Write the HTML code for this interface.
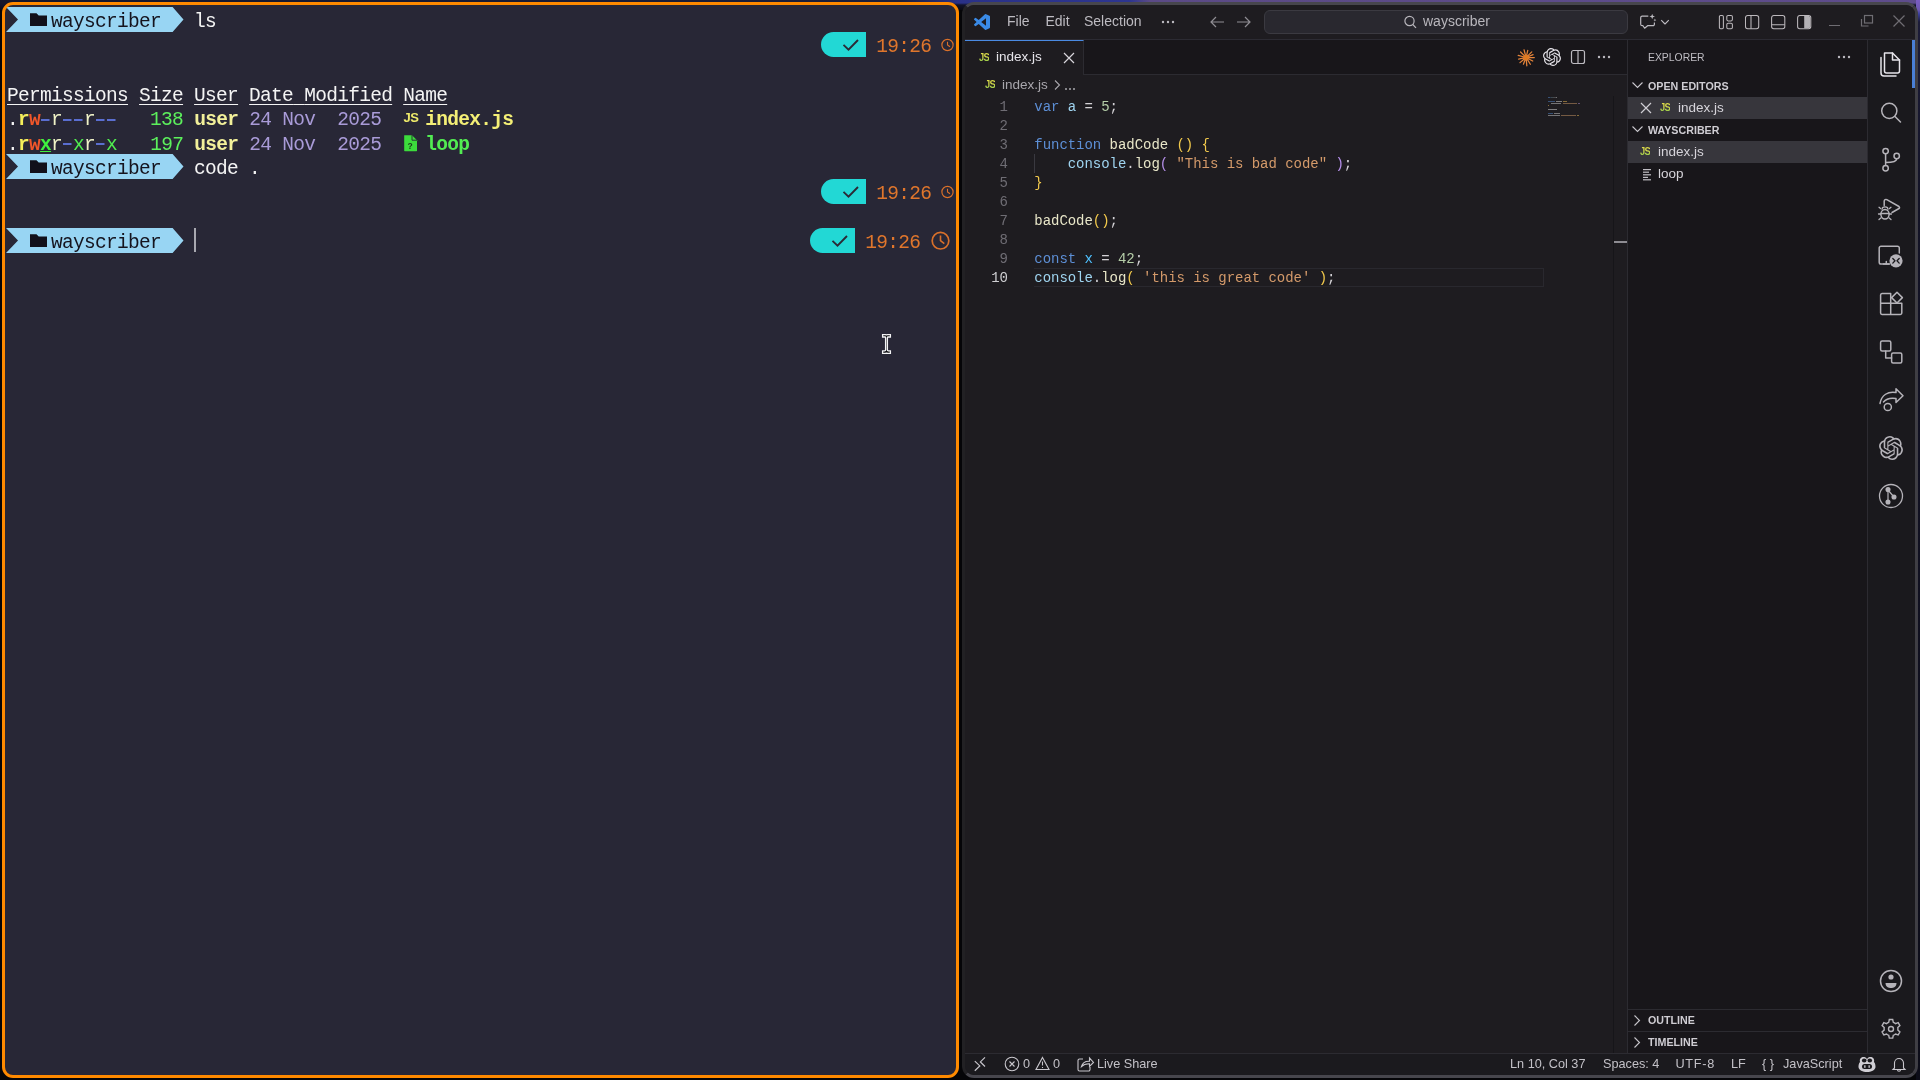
<!DOCTYPE html>
<html><head><meta charset="utf-8">
<style>
*{margin:0;padding:0;box-sizing:border-box}
html,body{width:1920px;height:1080px;overflow:hidden;background:#050508}
body{position:relative;font-family:"Liberation Sans",sans-serif;will-change:transform}
.abs{position:absolute}
#wall{position:absolute;left:0;top:0;width:1920px;height:10px;background:linear-gradient(180deg,rgba(0,0,0,0) 0,rgba(0,0,0,0) 3px,#12132a 5px,#0a0a14 10px),linear-gradient(90deg,#15162a 0,#1c1f3a 900px,#2a3188 960px,#2d3590 1130px,#5b4a86 1150px,#5e4c8c 1920px)}
/* terminal */
#term{position:absolute;left:2px;top:2px;width:957px;height:1076px;border:3px solid #ff8a00;border-radius:11px;background:#282736;overflow:hidden}
.tl{position:absolute;left:2px;height:24.5px;line-height:24.5px;font-family:"Liberation Mono",monospace;font-size:19.5px;letter-spacing:-0.7px;margin-top:3px;color:#f4f4f4;white-space:pre}
.pr{position:absolute;left:1px;width:177px;height:25px;background:#99d6f4}
.pr .notch{position:absolute;left:0;top:0;width:0;height:0;border-top:12.5px solid #282736;border-bottom:12.5px solid #282736;border-right:0;border-left:12px solid #282736;clip-path:polygon(0 0,100% 50%,0 100%)}
/* vscode */
#vs{position:absolute;left:962px;top:2px;width:956px;height:1076px;border:3px solid #47464d;border-left-color:#222124;border-right-color:#3f3e44;border-radius:12px;background:#1e1c20;overflow:hidden}
u{text-decoration-thickness:1px;text-underline-offset:2.5px}
.d{display:inline-block;width:11px;height:24.5px;vertical-align:top;background:linear-gradient(#5a6ed0,#5a6ed0) no-repeat 1px 10.6px/8.5px 2px}
.ui{font-family:"Liberation Sans",sans-serif;color:#cfcdd2}
#vsi{position:absolute;left:-965px;top:-5px;width:1920px;height:1080px}
.jsi{margin-top:0.5px;font:bold 11px/12px "Liberation Sans",sans-serif;letter-spacing:-0.8px;transform:scaleX(0.85);transform-origin:0 0;background:linear-gradient(180deg,#e2dc48 0,#d4d84a 45%,#8acb4c 100%);-webkit-background-clip:text;background-clip:text;color:transparent}
.sh{font-size:10.7px;line-height:14px;font-weight:bold;color:#cfcdd3}
.sb{top:1056px;font-size:12.7px;line-height:16px;color:#c3c1c7}
.kw{color:#5d8fd6}.vr{color:#9fd4f0}.nm{color:#b5cea8}.fn{color:#e8e6c8}.b1{color:#f2c94c}.b2{color:#b48ee8}.st{color:#d49a6a}.cn{color:#4fc1ff}
.code{font-family:"Liberation Mono",monospace;font-size:14px;letter-spacing:-0.04px;white-space:pre;position:absolute;height:19px;line-height:19px}
</style></head>
<body>
<div id="wall"></div>
<div class="abs" style="left:1916px;top:0;width:4px;height:1080px;background:linear-gradient(#7a5cc0 0,#6c58b0 10px,#3a3f9a 14px,#1c1c38 22px,#131326 200px,#0c0c18 1080px)"></div>

<div id="term">
<!-- row 0 prompt -->
<svg class="abs" style="left:1px;top:2px" width="180" height="25"><polygon points="0,0 166.6,0 177.5,12.5 166.6,25 0,25 12,12.5" fill="#98d5f3"/><path d="M24,6.2 h6.5 l2.2,2.3 h8.3 v10.6 h-17 z" fill="#11101a"/></svg>
<div class="tl" style="top:2px"><span style="color:#15141e">    wayscriber</span>   ls</div>
<!-- row 1 right -->
<svg class="abs" style="left:816px;top:26.5px" width="140" height="25"><path d="M12.5,0 H45 V25 H12.5 A12.5,12.5 0 0 1 12.5,0 z" fill="#22d8d5"/><polyline points="22.5,12.9 27.5,17.6 37,8" fill="none" stroke="#2b2a36" stroke-width="1.9"/><circle cx="126.5" cy="13" r="5.6" fill="none" stroke="#d9702a" stroke-width="1.2"/><polyline points="126.5,9.8 126.5,13 129,14.8" fill="none" stroke="#d9702a" stroke-width="1.1"/></svg>
<div class="tl" style="top:26.5px;color:#e0762c">                                                                               19:26</div>
<!-- row 3 header -->
<div class="tl" style="top:75.5px"><u>Permissions</u> <u>Size</u> <u>User</u> <u>Date</u><u> </u><u>Modified</u> <u>Name</u></div>
<!-- row 4 -->
<div class="tl" style="top:100px">.<b style="color:#f5ef5a">r</b><b style="color:#f0562a">w</b><i class="d"></i><span style="color:#eff2c6">r</span><i class="d"></i><i class="d"></i><span style="color:#eff2c6">r</span><i class="d"></i><i class="d"></i>   <span style="color:#5cf05c">138</span> <b style="color:#f2f09a">user</b> <span style="color:#a99bd8">24 Nov  2025</span>    <b style="color:#f4ef76">index.js</b></div>
<div class="abs" style="left:398.5px;top:104.5px;height:24.5px;line-height:24.5px;font:bold 13px 'Liberation Sans';color:#eeea6a;letter-spacing:-0.5px">JS</div>
<!-- row 5 -->
<div class="tl" style="top:124.5px">.<b style="color:#f5ef5a">r</b><b style="color:#f0562a">w</b><b style="color:#3ff03f;text-decoration:underline">x</b><span style="color:#eff2c6">r</span><i class="d"></i><span style="color:#50ee50">x</span><span style="color:#eff2c6">r</span><i class="d"></i><span style="color:#50ee50">x</span>   <span style="color:#5cf05c">197</span> <b style="color:#f2f09a">user</b> <span style="color:#a99bd8">24 Nov  2025</span>    <b style="color:#52ec52">loop</b></div>
<svg class="abs" style="left:398px;top:129.5px" width="16" height="17"><path d="M1.2,0.2 H9 L14,5.2 V15.6 a0.6,0.6 0 0 1 -0.6,0.6 H1.8 a0.6,0.6 0 0 1 -0.6,-0.6 Z" fill="#3cdc3c"/><path d="M9,0.2 V5.2 H14" fill="none" stroke="#282736" stroke-width="0.9"/><text x="4.5" y="13.5" font-size="8.5" font-family="Liberation Sans" fill="#1a3a1a" font-weight="bold">?</text></svg>
<!-- row 6 prompt -->
<svg class="abs" style="left:1px;top:149px" width="180" height="25"><polygon points="0,0 166.6,0 177.5,12.5 166.6,25 0,25 12,12.5" fill="#98d5f3"/><path d="M24,6.2 h6.5 l2.2,2.3 h8.3 v10.6 h-17 z" fill="#11101a"/></svg>
<div class="tl" style="top:149px"><span style="color:#15141e">    wayscriber</span>   code .</div>
<!-- row 7 right -->
<svg class="abs" style="left:816px;top:173.5px" width="140" height="25"><path d="M12.5,0 H45 V25 H12.5 A12.5,12.5 0 0 1 12.5,0 z" fill="#22d8d5"/><polyline points="22.5,12.9 27.5,17.6 37,8" fill="none" stroke="#2b2a36" stroke-width="1.9"/><circle cx="126.5" cy="13" r="5.6" fill="none" stroke="#d9702a" stroke-width="1.2"/><polyline points="126.5,9.8 126.5,13 129,14.8" fill="none" stroke="#d9702a" stroke-width="1.1"/></svg>
<div class="tl" style="top:173.5px;color:#e0762c">                                                                               19:26</div>
<!-- row 9 prompt -->
<svg class="abs" style="left:1px;top:222.5px" width="180" height="25"><polygon points="0,0 166.6,0 177.5,12.5 166.6,25 0,25 12,12.5" fill="#98d5f3"/><path d="M24,6.2 h6.5 l2.2,2.3 h8.3 v10.6 h-17 z" fill="#11101a"/></svg>
<div class="tl" style="top:222.5px"><span style="color:#15141e">    wayscriber</span></div>
<div class="abs" style="left:189px;top:223px;width:1.5px;height:24px;background:#a8a8b0"></div>
<svg class="abs" style="left:805px;top:222.5px" width="150" height="25"><path d="M12.5,0 H45 V25 H12.5 A12.5,12.5 0 0 1 12.5,0 z" fill="#22d8d5"/><polyline points="22.5,12.9 27.5,17.6 37,8" fill="none" stroke="#2b2a36" stroke-width="1.9"/><circle cx="130.5" cy="12.7" r="8.3" fill="none" stroke="#d9702a" stroke-width="1.7"/><polyline points="130.5,7.5 130.5,12.7 134.3,15.6" fill="none" stroke="#d9702a" stroke-width="1.6"/></svg>
<div class="tl" style="top:222.5px;color:#e0762c">                                                                              19:26</div>
<!-- mouse cursor -->
<svg class="abs" style="left:865px;top:320px" width="35" height="40"><path d="M12.6,9.6 H15.5 Q16.5,9.6 16.5,10.4 Q16.5,9.6 17.5,9.6 H20.4 V12 H18.2 Q17.4,12 17.4,12.8 V25.1 Q17.4,25.9 18.2,25.9 H20.4 V28.4 H17.5 Q16.5,28.4 16.5,27.6 Q16.5,28.4 15.5,28.4 H12.6 V25.9 H14.8 Q15.6,25.9 15.6,25.1 V12.8 Q15.6,12 14.8,12 H12.6 Z" fill="#0a0a0e" stroke="#f4f4f6" stroke-width="1.3"/></svg>
</div>


<div id="vs"><div id="vsi">
<!-- title bar -->
<div class="abs" style="left:965px;top:5px;width:950px;height:35px;background:#1e1c20;border-bottom:1px solid #2c2b33"></div>
<svg class="abs" style="left:974px;top:14px" width="16" height="16" viewBox="0 0 100 100"><path d="M96.46 10.8 75.86.87a6.23 6.23 0 0 0-7.1 1.2L29.35 38.04 12.17 25.01a4.16 4.16 0 0 0-5.31.24L1.35 30.25a4.16 4.16 0 0 0 0 6.16L16.25 50 1.35 63.59a4.16 4.16 0 0 0 0 6.16l5.51 5a4.160 4.16 0 0 0 5.31.24l17.18-13.03 39.41 35.96a6.230 6.23 0 0 0 7.1 1.2l20.6-9.91a6.24 6.24 0 0 0 3.54-5.62V16.42a6.24 6.24 0 0 0-3.54-5.62ZM75.02 72.7 45.11 50l29.91-22.7Z" fill="#3a8ae6"/></svg>
<div class="abs ui" style="left:1007px;top:12px;font-size:14px;line-height:18px;color:#bdbbc1">File</div>
<div class="abs ui" style="left:1045.5px;top:12px;font-size:14px;line-height:18px;color:#bdbbc1">Edit</div>
<div class="abs ui" style="left:1084px;top:12px;font-size:14px;line-height:18px;color:#bdbbc1">Selection</div>
<svg class="abs" style="left:1160px;top:18px" width="16" height="8"><circle cx="3" cy="4" r="1.2" fill="#bdbbc1"/><circle cx="8" cy="4" r="1.2" fill="#bdbbc1"/><circle cx="13" cy="4" r="1.2" fill="#bdbbc1"/></svg>
<svg class="abs" style="left:1208px;top:14px" width="48" height="16" fill="none" stroke="#8f8d93" stroke-width="1.2"><path d="M3,8 H16 M8,3 L3,8 L8,13"/><path d="M29,8 H42 M37,3 L42,8 L37,13"/></svg>
<div class="abs" style="left:1264px;top:10px;width:364px;height:24px;border:1px solid #3b3a41;border-radius:6px;background:#29282f"></div>
<svg class="abs" style="left:1403px;top:15px" width="15" height="14" fill="none" stroke="#b8b6bc" stroke-width="1.2"><circle cx="6.5" cy="6" r="4.6"/><path d="M9.8,9.5 L13,12.8"/></svg>
<div class="abs ui" style="left:1423px;top:12.5px;font-size:14px;line-height:17px;color:#b9b7bd">wayscriber</div>
<!-- copilot chat -->
<svg class="abs" style="left:1638px;top:12px" width="34" height="20" fill="none" stroke="#bcbac0" stroke-width="1.2" stroke-linejoin="round"><path d="M10.3,4.2 H4.2 a1.5,1.5 0 0 0 -1.5,1.5 V12.2 a1.5,1.5 0 0 0 1.5,1.5 H5 L6.6,16.2 L9.6,13.7 H15 a1.4,1.4 0 0 0 1.4,-1.4 V10.6"/><path d="M14.2,1.8 l0.75,2 2,0.75 -2,0.75 -0.75,2 -0.75,-2 -2,-0.75 2,-0.75z" fill="#bcbac0" stroke="none"/><path d="M16.9,6.6 l0.45,1.05 1.05,0.45 -1.05,0.45 -0.45,1.05 -0.45,-1.05 -1.05,-0.45 1.05,-0.45z" fill="#bcbac0" stroke="none"/><path d="M23.2,8.2 L27,12 L30.8,8.2" stroke-width="1.1"/></svg>
<!-- layout icons -->
<svg class="abs" style="left:1716px;top:13px" width="100" height="18" fill="none" stroke="#bcb8bc" stroke-width="1.05">
<rect x="3.4" y="2.5" width="4" height="13.2" rx="1.2"/><rect x="10.8" y="2.5" width="5.6" height="5.4" rx="1.3"/><rect x="10.8" y="10.3" width="5.6" height="5.4" rx="1.3"/>
<rect x="29.5" y="2.5" width="13.2" height="13.2" rx="2.2"/><path d="M35,2.5 V15.7"/>
<rect x="55.6" y="2.5" width="13.2" height="13.2" rx="2.2"/><path d="M55.6,11.8 H68.8"/>
<rect x="81.6" y="2.5" width="13.2" height="13.2" rx="2.2"/><path d="M88.2,3 H92.6 a1.7,1.7 0 0 1 1.7,1.7 V13.5 a1.7,1.7 0 0 1 -1.7,1.7 H88.2 z" fill="#b4b2b6" stroke="none"/>
</svg>
<svg class="abs" style="left:1826px;top:10px" width="84" height="22" fill="none" stroke="#6f6d73" stroke-width="1.2"><path d="M3,15.5 H14"/><rect x="38.5" y="5.5" width="8" height="7.5"/><path d="M35.5,9 V16 H42.5"/><path d="M67.5,5.5 L78.5,16.5 M78.5,5.5 L67.5,16.5"/></svg>

<!-- tab bar -->
<div class="abs" style="left:965px;top:40px;width:662px;height:35px;background:#18161a;border-bottom:1px solid #2c2b31"></div>
<div class="abs" style="left:965px;top:40px;width:119px;height:35px;background:#1e1c20;border-top:1px solid #4a8ae2;border-right:1px solid #2c2b31"></div>
<div class="abs jsi" style="left:978.5px;top:50px">JS</div>
<div class="abs ui" style="left:996px;top:48px;font-size:13.5px;line-height:17px;color:#e6e4ea">index.js</div>
<svg class="abs" style="left:1062px;top:51px" width="14" height="14" fill="none" stroke="#d8d6dc" stroke-width="1.2"><path d="M2,2 L12,12 M12,2 L2,12"/></svg>
<!-- editor actions -->
<svg class="abs" style="left:1517px;top:48px" width="19" height="19"><path d="M11.10,9.50 L17.30,9.50 M10.87,10.44 L15.72,13.02 M10.16,11.20 L13.34,16.28 M9.27,11.49 L9.82,17.77 M8.35,11.35 L6.40,16.18 M7.57,10.79 L2.97,14.64 M7.14,9.92 L1.67,11.08 M7.17,8.98 L1.18,7.38 M7.69,8.09 L3.58,3.98 M8.58,7.57 L7.03,1.77 M9.55,7.55 L10.76,2.29 M10.51,8.09 L14.76,3.84 M10.95,8.75 L16.05,6.69" stroke="#e5843a" stroke-width="1.25" stroke-linecap="round"/><circle cx="9.1" cy="9.5" r="2.8" fill="#e07a22"/></svg>
<svg class="abs openai" style="left:1543px;top:48px" width="18" height="18" viewBox="0 0 24 24"><path fill="#e4e2e8" d="M22.28 9.82a5.98 5.98 0 0 0-.52-4.91 6.05 6.05 0 0 0-6.51-2.9A6.07 6.07 0 0 0 4.98 4.18a5.98 5.98 0 0 0-4 2.9 6.05 6.05 0 0 0 .74 7.1 5.98 5.98 0 0 0 .51 4.91 6.05 6.05 0 0 0 6.51 2.9A5.98 5.98 0 0 0 13.26 24a6.06 6.06 0 0 0 5.77-4.21 5.99 5.99 0 0 0 4-2.9 6.06 6.06 0 0 0-.75-7.07zM13.26 22.43a4.48 4.48 0 0 1-2.88-1.04l.14-.08 4.78-2.76a.8.8 0 0 0 .39-.68v-6.74l2.02 1.17a.07.07 0 0 1 .04.05v5.58a4.5 4.5 0 0 1-4.49 4.5zm-9.66-4.13a4.47 4.47 0 0 1-.53-3.01l.14.09 4.78 2.76a.77.77 0 0 0 .78 0l5.84-3.37v2.33a.08.08 0 0 1-.03.06L9.74 19.95a4.5 4.5 0 0 1-6.14-1.65zM2.34 7.9a4.49 4.49 0 0 1 2.37-1.97V11.6a.77.77 0 0 0 .39.68l5.81 3.35-2.02 1.17a.08.08 0 0 1-.07 0l-4.83-2.79A4.5 4.5 0 0 1 2.34 7.87zm16.6 3.86L13.1 8.36 15.12 7.2a.08.08 0 0 1 .07 0l4.83 2.79a4.49 4.49 0 0 1-.68 8.1v-5.68a.79.79 0 0 0-.41-.67zm2.01-3.02l-.14-.09-4.77-2.78a.78.78 0 0 0-.79 0L9.41 9.23V6.9a.07.07 0 0 1 .03-.06l4.83-2.79a4.5 4.5 0 0 1 6.68 4.66zM8.31 12.86L6.29 11.7a.08.08 0 0 1-.04-.06V6.08a4.5 4.5 0 0 1 7.38-3.45l-.14.08L8.71 5.47a.8.8 0 0 0-.39.68zm1.1-2.37l2.6-1.5 2.61 1.5v3l-2.6 1.5-2.61-1.5z"/></svg>
<svg class="abs" style="left:1569px;top:48px" width="18" height="18" fill="none" stroke="#bcbac0" stroke-width="1.2"><rect x="2.5" y="2.5" width="13" height="13" rx="2"/><path d="M9,2.5 V15.5"/></svg>
<svg class="abs" style="left:1596px;top:53px" width="16" height="8"><circle cx="3" cy="4" r="1.2" fill="#bcbac0"/><circle cx="8" cy="4" r="1.2" fill="#bcbac0"/><circle cx="13" cy="4" r="1.2" fill="#bcbac0"/></svg>

<!-- breadcrumb -->
<div class="abs jsi" style="left:984.5px;top:77px">JS</div>
<div class="abs ui" style="left:1002px;top:76px;font-size:13.5px;line-height:17px;color:#a9a7ad">index.js</div>
<svg class="abs" style="left:1052px;top:79px" width="10" height="12" fill="none" stroke="#a9a7ad" stroke-width="1.1"><path d="M3,1.5 L7.5,6 L3,10.5"/></svg>
<svg class="abs" style="left:1064px;top:87px" width="14" height="4"><circle cx="2" cy="2" r="1" fill="#a9a7ad"/><circle cx="6" cy="2" r="1" fill="#a9a7ad"/><circle cx="10" cy="2" r="1" fill="#a9a7ad"/></svg>

<!-- editor -->
<div id="gut" class="abs" style="left:966px;top:97.5px;width:42px;text-align:right;font-family:'Liberation Mono',monospace;font-size:14px;line-height:19px;color:#6f6d74;white-space:pre">1
2
3
4
5
6
7
8
9
<span style="color:#cfcfd2">10</span></div>
<div class="abs" style="left:1034px;top:267.5px;width:510px;height:19px;border:1px solid #29282e;border-left:0"></div>
<div class="abs" style="left:1034px;top:153.5px;width:1px;height:19px;background:#3a3940"></div>
<div id="code" class="abs" style="left:1034.3px;top:97.5px;font-family:'Liberation Mono',monospace;font-size:14px;letter-spacing:-0.04px;line-height:19px;color:#d4d2d6;white-space:pre"><span class="kw">var</span> <span class="vr">a</span> = <span class="nm">5</span>;

<span class="kw">function</span> <span class="fn">badCode</span> <span class="b1">()</span> <span class="b1">{</span>
    <span class="vr">console</span>.<span class="fn">log</span><span class="b2">(</span> <span class="st">"This is bad code"</span> <span class="b2">)</span>;
<span class="b1">}</span>

<span class="fn">badCode</span><span class="b1">()</span>;

<span class="kw">const</span> <span class="cn">x</span> = <span class="nm">42</span>;
<span class="vr">console</span>.<span class="fn">log</span><span class="b1">(</span> <span class="st">'this is great code'</span> <span class="b1">)</span>;</div>
<!-- minimap -->
<svg class="abs" style="left:1546px;top:96px" width="45" height="24">
<g opacity="0.5">
<rect x="2" y="1" width="2.5" height="1" fill="#5588cc"/><rect x="5.5" y="1" width="1" height="1" fill="#9cd"/><rect x="7.5" y="1" width="1" height="1" fill="#ccc"/><rect x="9.5" y="1" width="1.5" height="1" fill="#ccc"/>
<rect x="2" y="5" width="7" height="1" fill="#5588cc"/><rect x="10" y="5" width="6" height="1" fill="#ddd"/><rect x="17" y="5" width="4" height="1" fill="#eb5"/>
<rect x="5" y="7" width="10" height="1" fill="#ccc"/><rect x="17" y="7" width="14" height="1" fill="#c96"/><rect x="32" y="7" width="2" height="1" fill="#a8c"/>
<rect x="2" y="9" width="1" height="1" fill="#eb5"/>
<rect x="2" y="13" width="9" height="1" fill="#ddd"/>
<rect x="2" y="17" width="5" height="1" fill="#5588cc"/><rect x="8" y="17" width="6" height="1" fill="#ccc"/>
<rect x="2" y="19" width="12" height="1" fill="#ccc"/><rect x="15" y="19" width="15" height="1" fill="#c96"/><rect x="31" y="19" width="2" height="1" fill="#eb5"/>
</g></svg>
<div class="abs" style="left:1613px;top:96px;width:14px;height:957px;border-left:1px solid #161519;background:#1e1c20"></div>
<div class="abs" style="left:1614px;top:241px;width:13px;height:2px;background:#8e8c92"></div>

<!-- sidebar -->
<div class="abs" style="left:1627px;top:40px;width:241px;height:1013px;background:#18161a;border-left:1px solid #2c2b31;border-right:1px solid #2c2b31"></div>
<div class="abs ui" style="left:1648px;top:50.5px;font-size:10.4px;line-height:14px;color:#bfbdc3">EXPLORER</div>
<svg class="abs" style="left:1836px;top:53px" width="16" height="8"><circle cx="3" cy="4" r="1.2" fill="#bcbac0"/><circle cx="8" cy="4" r="1.2" fill="#bcbac0"/><circle cx="13" cy="4" r="1.2" fill="#bcbac0"/></svg>
<svg class="abs" style="left:1631px;top:79px" width="14" height="12" fill="none" stroke="#c8c6cc" stroke-width="1.1"><path d="M1.5,3.5 L6.5,8.5 L11.5,3.5"/></svg>
<div class="abs ui sh" style="left:1648px;top:78.5px">OPEN EDITORS</div>
<div class="abs" style="left:1628px;top:97px;width:239px;height:22px;background:#37363c"></div>
<svg class="abs" style="left:1639px;top:101px" width="14" height="14" fill="none" stroke="#d0ced4" stroke-width="1.2"><path d="M2,2 L12,12 M12,2 L2,12"/></svg>
<div class="abs jsi" style="left:1659.5px;top:100px">JS</div>
<div class="abs ui" style="left:1678px;top:99px;font-size:13.5px;line-height:17px;color:#d6d4da">index.js</div>
<svg class="abs" style="left:1631px;top:123px" width="14" height="12" fill="none" stroke="#c8c6cc" stroke-width="1.1"><path d="M1.5,3.5 L6.5,8.5 L11.5,3.5"/></svg>
<div class="abs ui sh" style="left:1648px;top:123px">WAYSCRIBER</div>
<div class="abs" style="left:1628px;top:141px;width:239px;height:22px;background:#37363c"></div>
<div class="abs jsi" style="left:1639.5px;top:144px">JS</div>
<div class="abs ui" style="left:1658px;top:143px;font-size:13.5px;line-height:17px;color:#d6d4da">index.js</div>
<svg class="abs" style="left:1642px;top:167px" width="12" height="14" fill="#c0bec4"><rect x="1" y="2" width="8" height="1.2"/><rect x="1" y="4.6" width="6" height="1.2"/><rect x="1" y="7.2" width="8" height="1.2"/><rect x="1" y="9.8" width="5" height="1.2"/><rect x="1" y="12.2" width="8" height="1.2"/></svg>
<div class="abs ui" style="left:1658px;top:165px;font-size:13.5px;line-height:17px;color:#d6d4da">loop</div>
<div class="abs" style="left:1628px;top:1009px;width:239px;height:1px;background:#2c2b31"></div>
<svg class="abs" style="left:1631px;top:1014px" width="12" height="14" fill="none" stroke="#c8c6cc" stroke-width="1.1"><path d="M3.5,1.5 L8.5,6.5 L3.5,11.5"/></svg>
<div class="abs ui sh" style="left:1648px;top:1013px">OUTLINE</div>
<div class="abs" style="left:1628px;top:1031px;width:239px;height:1px;background:#2c2b31"></div>
<svg class="abs" style="left:1631px;top:1036px" width="12" height="14" fill="none" stroke="#c8c6cc" stroke-width="1.1"><path d="M3.5,1.5 L8.5,6.5 L3.5,11.5"/></svg>
<div class="abs ui sh" style="left:1648px;top:1035px">TIMELINE</div>

<!-- activity bar -->
<div class="abs" style="left:1868px;top:40px;width:47px;height:1013px;background:#1a191d"></div>
<div class="abs" style="left:1912px;top:40px;width:3px;height:48px;background:#4a7fd6"></div>
<svg class="abs" style="left:1868px;top:40px" width="47" height="1013" fill="none" stroke="#b5b3b9" stroke-width="1.5" stroke-linejoin="round" stroke-linecap="round">
<!-- files -->
<path d="M16.5,13 H24.5 L31.5,20 V31 a2,2 0 0 1 -2,2 H18.5 a2,2 0 0 1 -2,-2 Z" stroke="#e6e4ea"/><path d="M24.5,13 V20 H31.5" stroke="#e6e4ea"/><path d="M13,17.5 V33 a3,3 0 0 0 3,3 H28" stroke="#e6e4ea"/>
<!-- search -->
<circle cx="21.3" cy="70.8" r="7.6"/><path d="M27,76.5 L32.5,82"/>
<!-- scm -->
<circle cx="17.6" cy="111.1" r="2.7"/><circle cx="17.6" cy="128.2" r="2.7"/><circle cx="28.7" cy="116" r="2.7"/><path d="M17.6,113.8 V125.5 M28.7,118.7 Q28.7,122.5 17.6,122.5"/>
<!-- debug -->
<path d="M16.2,165.5 V161 a1.8,1.8 0 0 1 2.6,-1.4 L31,166.5 a1.2,1.2 0 0 1 0,2 L24,172.5"/>
<ellipse cx="17" cy="174.3" rx="4.1" ry="4.8"/><path d="M14,169.3 a3,2.4 0 0 1 6,0 M13,173.5 H21" stroke-width="1.3"/><path d="M12.5,168.5 L11,167.3 M21.5,168.5 L23,167.3 M12.5,174 H10.5 M21.5,174 H23.5 M12.8,178 L11,179.5 M21.2,178 L23,179.5" stroke-width="1.3"/>
<!-- remote -->
<path d="M20,224 H11.5 a1.8,1.8 0 0 1 -1.8,-1.8 V208.1 a1.8,1.8 0 0 1 1.8,-1.8 H28 a1.8,1.8 0 0 1 1.8,1.8 V213" transform="translate(1.5,0)"/><path d="M15,224 H20.5 M17.8,221.5 V224" transform="translate(0.5,0)"/>
<circle cx="28" cy="220.8" r="6.6" fill="#b5b3b9" stroke="none"/><path d="M24.8,218.5 L27,220.8 L24.8,223.1 M31.2,218.5 L29,220.8 L31.2,223.1" stroke="#1a191d" stroke-width="1.3"/>
<!-- extensions -->
<path d="M14,253.5 H22.7 V263.3 H12.6 V255 a1.5,1.5 0 0 1 1.4,-1.5 Z M12.6,263.3 H22.7 V274.4 H14 a1.5,1.5 0 0 1 -1.4,-1.5 Z M22.7,263.3 H33.8 V273 a1.4,1.4 0 0 1 -1.4,1.4 H22.7 Z"/><path d="M29,252.2 L34.4,257.6 L29,263 L23.6,257.6 Z"/>
<!-- containers -->
<rect x="12.6" y="301" width="10.2" height="10" rx="1.5"/><rect x="23.6" y="313" width="10.2" height="10" rx="1.5"/><path d="M17.7,311 V318 H23.6"/>
<!-- live share -->
<path d="M12,363.5 C13.5,355 20,351 28,352.5 V348.8 L35,355.8 L28,362.5 V358.5 C22,357.5 18,359 15.5,362"/><circle cx="19.8" cy="367" r="3.6"/>
<!-- gitlens-like -->
<circle cx="23" cy="456" r="11.5" stroke-width="1.3"/><circle cx="20" cy="449.5" r="1.8" fill="#b5b3b9"/><circle cx="20" cy="462" r="1.8" fill="#b5b3b9"/><circle cx="26" cy="457" r="1.8" fill="#b5b3b9"/><path d="M20,449.5 V462 M20,450 L26,457" stroke-width="1.2"/>
<!-- account -->
<circle cx="23" cy="941" r="10.5"/><circle cx="23" cy="937" r="2.6" fill="#b5b3b9" stroke="none"/><path d="M17.5,943 H28.5 C28.5,947 25.5,948 23,948 C20.5,948 17.5,947 17.5,943z" fill="#b5b3b9" stroke="none"/>
</svg>
<svg class="abs openai" style="left:1879px;top:436px" width="24" height="24" viewBox="0 0 24 24"><use href="#oai" fill="#b5b3b9"/></svg>
<svg class="abs" style="left:1879px;top:1017px" width="24" height="24" viewBox="0 0 24 24" fill="none" stroke="#b5b3b9" stroke-width="1.4"><path d="M10.3,2.5 h3.4 l0.6,2.8 a7.5,7.5 0 0 1 2.2,1.3 l2.7,-0.9 1.7,2.9 -2.1,1.9 a7.5,7.5 0 0 1 0,2.6 l2.1,1.9 -1.7,2.9 -2.7,-0.9 a7.5,7.5 0 0 1 -2.2,1.3 l-0.6,2.8 h-3.4 l-0.6,-2.8 a7.5,7.5 0 0 1 -2.2,-1.3 l-2.7,0.9 -1.7,-2.9 2.1,-1.9 a7.5,7.5 0 0 1 0,-2.6 l-2.1,-1.9 1.7,-2.9 2.7,0.9 a7.5,7.5 0 0 1 2.2,-1.3 z"/><circle cx="12" cy="12" r="2.5"/></svg>

<!-- status bar -->
<div class="abs" style="left:965px;top:1053px;width:950px;height:22px;background:#1b1a1e;border-top:1px solid #2c2b31"></div>
<svg class="abs" style="left:972px;top:1056px" width="16" height="16" fill="none" stroke="#c8c6cc" stroke-width="1.2"><path d="M2.8,5.1 L7.8,9.9 L2.8,14.7 M13,1.4 L8.4,5.9 L13,10.5"/></svg>
<svg class="abs" style="left:1004px;top:1056px" width="48" height="16" fill="none" stroke="#c8c6cc" stroke-width="1.1"><circle cx="8" cy="8" r="6.8"/><path d="M5.5,5.5 L10.5,10.5 M10.5,5.5 L5.5,10.5"/><path d="M38.5,1.5 L45,13.5 H32 Z"/><path d="M38.5,5.5 V9.5 M38.5,11 V12"/></svg>
<div class="abs ui sb" style="left:1023px">0</div>
<div class="abs ui sb" style="left:1053px">0</div>
<svg class="abs" style="left:1076px;top:1055px" width="19" height="18" fill="none" stroke="#c8c6cc" stroke-width="1.1"><path d="M7,4 H3.5 a1.5,1.5 0 0 0 -1.5,1.5 V14.5 a1.5,1.5 0 0 0 1.5,1.5 H12.5 a1.5,1.5 0 0 0 1.5,-1.5 V12"/><path d="M5.5,11.5 C6.5,7.5 9.5,6 13.5,6.2 V3 L17.5,7.5 L13.5,11.5 V8.8 C10,8.7 7.5,9.5 5.5,11.5 Z"/></svg>
<div class="abs ui sb" style="left:1097px">Live Share</div>
<div class="abs ui sb" style="left:1510px">Ln 10, Col 37</div>
<div class="abs ui sb" style="left:1603px">Spaces: 4</div>
<div class="abs ui sb" style="left:1675.5px;letter-spacing:0.7px">UTF-8</div>
<div class="abs ui sb" style="left:1731px">LF</div>
<div class="abs ui sb" style="left:1762px">{ }</div>
<div class="abs ui sb" style="left:1783px">JavaScript</div>
<svg class="abs" style="left:1857px;top:1055px" width="20" height="18" viewBox="0 0 20 18"><path d="M3,7 C2,3 5,1.5 7.5,2 C9,2.3 10,3.5 10,5 C10,3.5 11,2.3 12.5,2 C15,1.5 18,3 17,7 C18.5,8.5 18.5,11 18.5,12 C18.5,15 14,17 10,17 C6,17 1.5,15 1.5,12 C1.5,11 1.5,8.5 3,7 Z" fill="#d0ced4"/><rect x="5" y="9" width="10" height="5" rx="2.5" fill="#1b1a1e"/><rect x="7.2" y="10.3" width="1.3" height="2.5" fill="#d0ced4"/><rect x="11.5" y="10.3" width="1.3" height="2.5" fill="#d0ced4"/><ellipse cx="7.2" cy="5.5" rx="2.3" ry="2" fill="#1b1a1e"/><ellipse cx="12.8" cy="5.5" rx="2.3" ry="2" fill="#1b1a1e"/></svg>
<svg class="abs" style="left:1891px;top:1055px" width="16" height="18" fill="none" stroke="#c8c6cc" stroke-width="1.1"><path d="M3.5,13 V8 a4.5,4.5 0 0 1 9,0 V13 L14,14.5 H2 Z"/><path d="M6.5,14.8 a1.5,1.5 0 0 0 3,0"/></svg>
<svg width="0" height="0" style="position:absolute"><defs><path id="oai" d="M22.28 9.82a5.98 5.98 0 0 0-.52-4.91 6.05 6.05 0 0 0-6.51-2.9A6.07 6.07 0 0 0 4.98 4.18a5.98 5.98 0 0 0-4 2.9 6.05 6.05 0 0 0 .74 7.1 5.98 5.98 0 0 0 .51 4.91 6.05 6.05 0 0 0 6.51 2.9A5.98 5.98 0 0 0 13.26 24a6.060 6.06 0 0 0 5.77-4.21 5.99 5.99 0 0 0 4-2.9 6.06 6.06 0 0 0-.75-7.07zM13.26 22.43a4.48 4.48 0 0 1-2.88-1.04l.14-.08 4.78-2.76a.8.8 0 0 0 .39-.68v-6.74l2.02 1.17a.07.07 0 0 1 .04.05v5.58a4.5 4.5 0 0 1-4.49 4.5zm-9.66-4.13a4.47 4.47 0 0 1-.53-3.01l.14.09 4.78 2.76a.77.77 0 0 0 .78 0l5.84-3.37v2.33a.08.08 0 0 1-.03.06L9.74 19.95a4.5 4.5 0 0 1-6.14-1.65zM2.34 7.9a4.49 4.49 0 0 1 2.37-1.970V11.6a.77.77 0 0 0 .39.68l5.81 3.35-2.02 1.17a.08.08 0 0 1-.07 0l-4.83-2.79A4.5 4.5 0 0 1 2.34 7.87zm16.6 3.86L13.1 8.36 15.12 7.2a.08.08 0 0 1 .07 0l4.83 2.79a4.49 4.49 0 0 1-.68 8.1v-5.68a.79.79 0 0 0-.41-.67zm2.01-3.02l-.14-.09-4.77-2.78a.78.78 0 0 0-.79 0L9.41 9.23V6.9a.07.07 0 0 1 .03-.06l4.83-2.79a4.5 4.5 0 0 1 6.68 4.66zM8.31 12.86L6.290 11.7a.08.08 0 0 1-.04-.06V6.08a4.5 4.5 0 0 1 7.38-3.45l-.14.08L8.71 5.47a.8.8 0 0 0-.39.68zm1.1-2.37l2.6-1.5 2.61 1.5v3l-2.6 1.5-2.61-1.5z"/></defs></svg>
</div></div>


</body></html>
